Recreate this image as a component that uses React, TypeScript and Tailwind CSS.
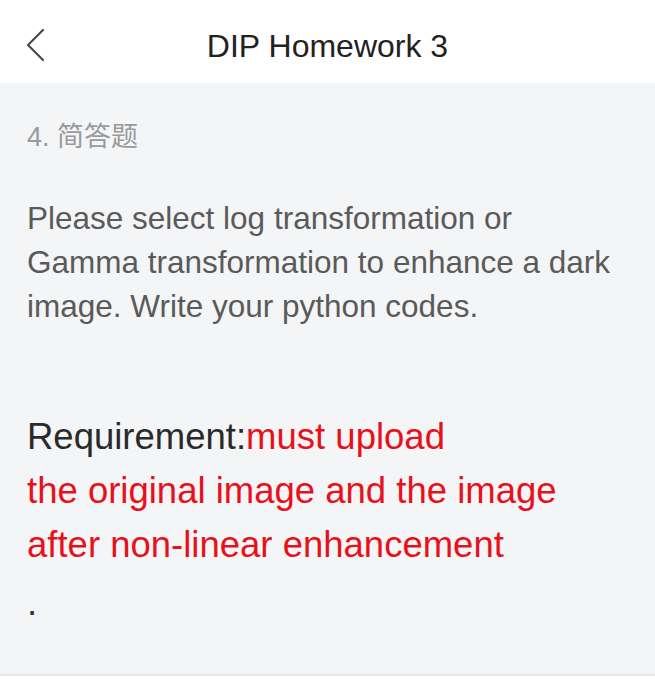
export default function App() {
  return (
    <div className="w-[655px] h-[700px] bg-white font-['Liberation_Sans',Arial,'Noto_Sans_CJK_SC',sans-serif]">
      <header className="relative flex items-center justify-center h-[83px] bg-white">
        <svg className="absolute left-[24px] top-[27px]" width="24" height="36" viewBox="0 0 24 36" fill="none">
          <polyline points="19,3 4,18 19,33" stroke="#4a4a4a" strokeWidth="2.2" strokeLinecap="round" strokeLinejoin="round" />
        </svg>
        <h1 className="text-[32px] text-[#222] leading-none mt-[8px]">DIP Homework 3</h1>
      </header>

      <main className="h-[593px] bg-[#f4f5f7] border-b-2 border-[#e8e8ea] px-[27px] pt-[35px]">
        <p className="text-[27px] leading-[38px] text-[#9a9a9a]">4. 简答题</p>

        <p className="mt-[40px] text-[31.5px] leading-[44px] text-[#5a5a5a]">
          Please select log transformation or Gamma transformation to enhance a dark image. Write your python codes.
        </p>

        <div className="mt-[82px] text-[36.5px] leading-[54px]">
          <p>
            <span className="text-[#2a2a2a]">Requirement:</span>
            <span className="text-[#e8101a]">must upload</span>
          </p>
          <p className="text-[#e8101a]">the original image and the image</p>
          <p className="text-[#e8101a]">after non-linear enhancement</p>
          <p className="text-[#333] mt-[4px]">.</p>
        </div>
      </main>
    </div>
  )
}
